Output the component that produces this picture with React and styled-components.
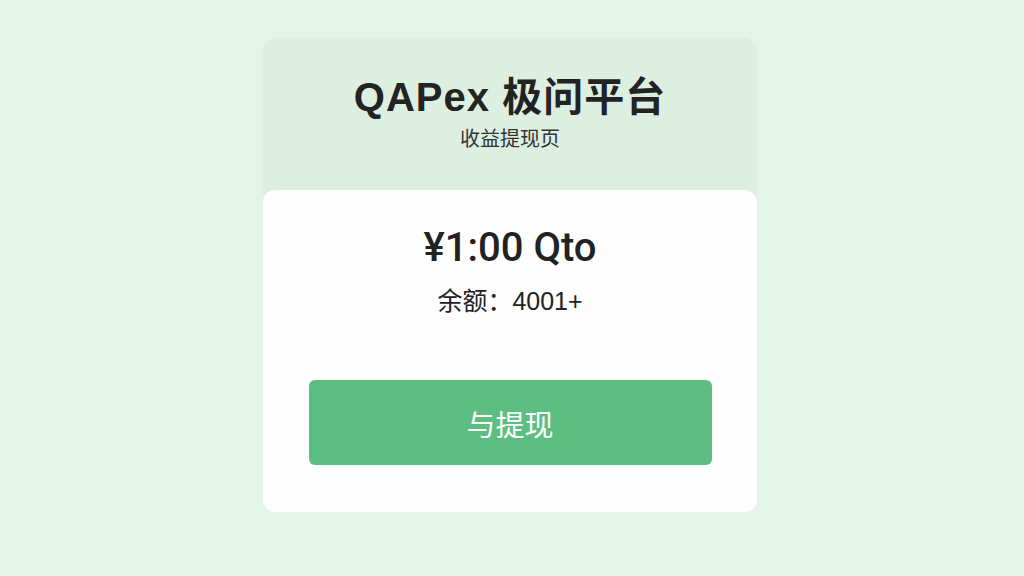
import React from 'react';
import styled, { createGlobalStyle } from 'styled-components';

const GlobalStyle = createGlobalStyle`
  html, body {
    margin: 0;
    padding: 0;
  }
  body {
    background-color: #e3f4e8;
    font-family: "Liberation Sans", "Noto Sans CJK SC", sans-serif;
    color: #222;
  }
`;

const Page = styled.div`
  width: 1024px;
  height: 576px;
  display: flex;
  justify-content: center;
  align-items: flex-start;
  padding-top: 38px;
  padding-right: 4px;
  box-sizing: border-box;
`;

const Card = styled.div`
  width: 494px;
  background-color: #dcefe0;
  border-radius: 14px;
  display: flex;
  flex-direction: column;
`;

const Header = styled.div`
  height: 152px;
  display: flex;
  flex-direction: column;
  align-items: center;
  padding-top: 34px;
  box-sizing: border-box;
`;

const Title = styled.h1`
  margin: 0;
  font-size: 40px;
  font-weight: 700;
  line-height: 50px;
  letter-spacing: 1px;
  color: #232323;
`;

const Subtitle = styled.div`
  margin-top: 4px;
  font-size: 20px;
  line-height: 26px;
  color: #333;
`;

const Panel = styled.div`
  height: 322px;
  background-color: #fdfefd;
  border-radius: 12px;
  display: flex;
  flex-direction: column;
  align-items: center;
  padding-top: 34px;
  box-sizing: border-box;
`;

const Amount = styled.div`
  font-family: Roboto, "Noto Sans CJK SC", sans-serif;
  font-size: 40px;
  font-weight: 500;
  line-height: 48px;
  color: #222;
`;

const Balance = styled.div`
  margin-top: 14px;
  font-size: 25px;
  line-height: 30px;
  color: #222;
`;

const WithdrawButton = styled.button`
  margin-top: 64px;
  width: 403px;
  height: 85px;
  border: none;
  border-radius: 6px;
  background-color: #5cbf81;
  color: #fff;
  font-family: inherit;
  font-size: 29px;
  cursor: pointer;
`;

const App = () => {
  return (
    <>
      <GlobalStyle />
      <Page>
        <Card>
          <Header>
            <Title>QAPex 极问平台</Title>
            <Subtitle>收益提现页</Subtitle>
          </Header>
          <Panel>
            <Amount>¥1:00 Qto</Amount>
            <Balance>余额：4001+</Balance>
            <WithdrawButton>与提现</WithdrawButton>
          </Panel>
        </Card>
      </Page>
    </>
  );
};

export default App;
